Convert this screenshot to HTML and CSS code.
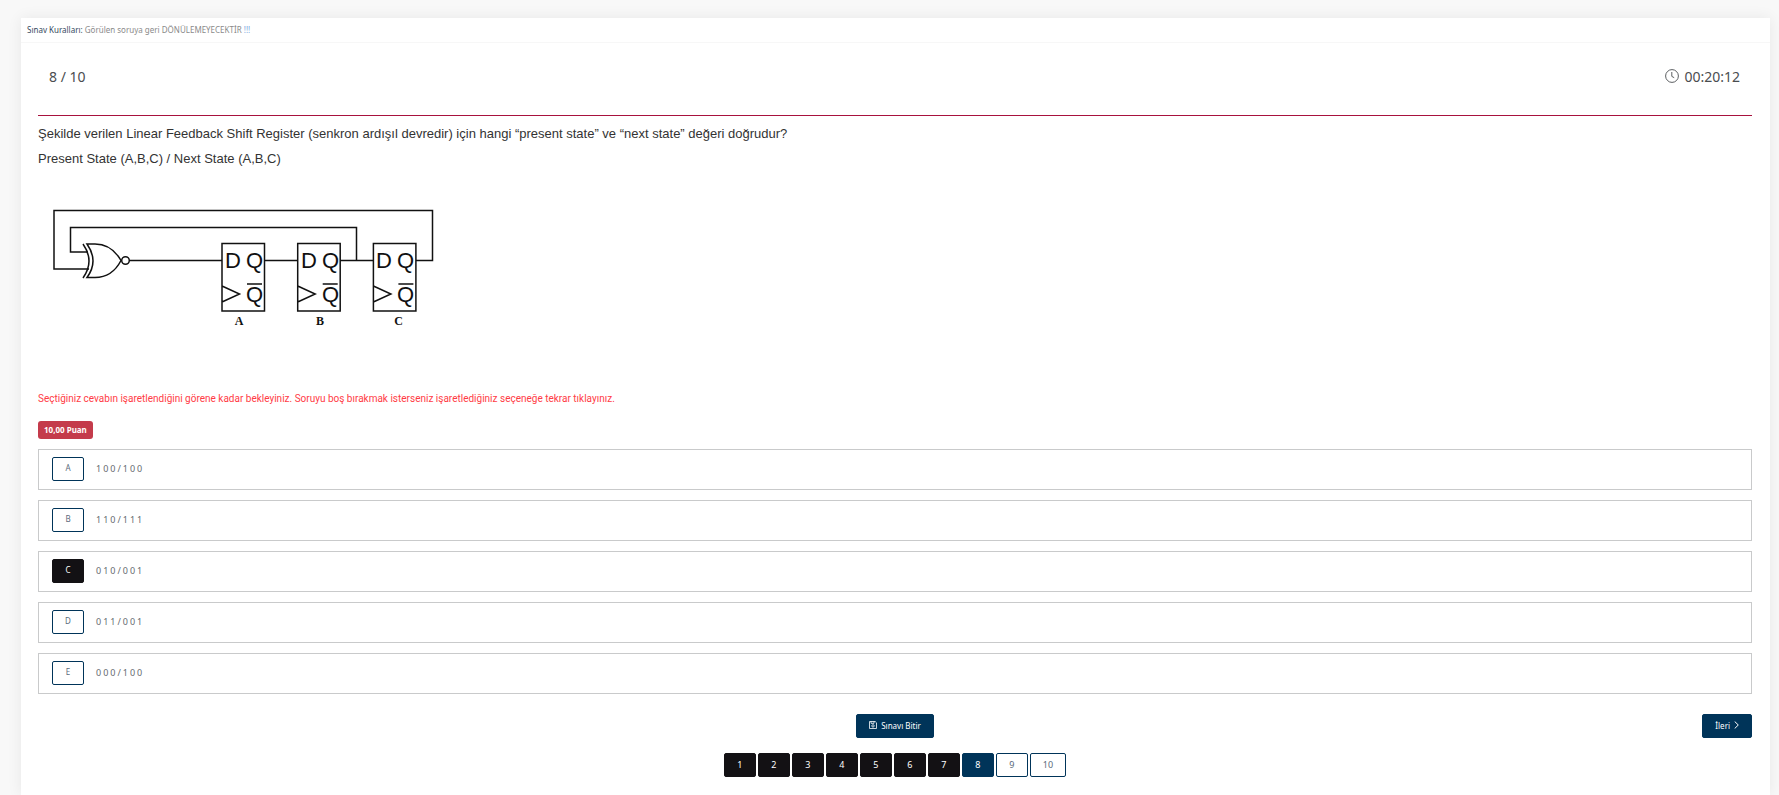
FILE: index.html
```html
<!DOCTYPE html>
<html lang="tr">
<head>
<meta charset="utf-8">
<title>Sınav</title>
<link rel="stylesheet" href="styles.css">
</head>
<body>
<main class="card">
  <header class="rules"><span class="rules-title">Sınav Kuralları:</span> Görülen soruya geri DÖNÜLEMEYECEKTİR <span class="rules-mark">!!!</span></header>
  <section class="content">
    <div class="status">
      <span>8 / 10</span>
      <span class="timer">
        <svg class="clock" viewBox="0 0 14 14" fill="none" stroke="currentColor" aria-hidden="true"><circle cx="7" cy="7" r="6.4" stroke-width="0.9"/><path d="M6.8 3v4.4l2.4 1.3" stroke-width="0.9"/></svg>
        00:20:12
      </span>
    </div>
    <div class="question">
      <p>Şekilde verilen Linear Feedback Shift Register (senkron ardışıl devredir) için hangi “present state” ve “next state” değeri doğrudur?</p>
      <p>Present State (A,B,C) / Next State (A,B,C)</p>
      <svg class="circuit" viewBox="38 190 420 160" role="img" aria-label="LFSR">
        <g fill="none" stroke="#111" stroke-width="1.5">
          <path d="M89 269H54V210.500H432.500V260.500H416"/>
          <path d="M88 252H70.500V227.500H356.500V260.500"/>
          <path d="M83 244Q95 261 83 278"/>
          <path d="M87 244H95C107 244 115 250 121 260.500C115 272 107 277.500 95 277.500H87Q99 261 87 244Z"/>
          <circle cx="125.500" cy="260.500" r="3.800"/>
          <path d="M129.500 260.500H222M264.500 260.500H298M340 260.500H374"/>
          <path d="M222 243.500h42.500v67.500H222zM222 286l17.500 8-17.500 8M247 284h15"/>
          <path d="M297.700 243.500h42.500v67.500h-42.500zM297.700 286l17.500 8-17.500 8M322.700 284h15"/>
          <path d="M373.400 243.500h42.500v67.500h-42.500zM373.400 286l17.500 8-17.500 8M398.400 284h15"/>
        </g>
        <g class="pin">
          <text x="225" y="268">D</text><text x="246" y="268">Q</text><text x="246" y="302">Q</text>
          <text x="301" y="268">D</text><text x="322" y="268">Q</text><text x="322" y="302">Q</text>
          <text x="376" y="268">D</text><text x="397" y="268">Q</text><text x="397" y="302">Q</text>
        </g>
        <g class="stage"><text x="239" y="325">A</text><text x="320" y="325">B</text><text x="398.500" y="325">C</text></g>
      </svg>
    </div>
    <p class="warning">Seçtiğiniz cevabın işaretlendiğini görene kadar bekleyiniz. Soruyu boş bırakmak isterseniz işaretlediğiniz seçeneğe tekrar tıklayınız.</p>
    <span class="badge">10,00 Puan</span>
    <div class="options">
      <div class="option"><button class="btn outline" type="button" aria-labelledby="a">A</button><span id="a">100/100</span></div>
      <div class="option"><button class="btn outline" type="button" aria-labelledby="b">B</button><span id="b">110/111</span></div>
      <div class="option"><button class="btn dark" type="button" aria-labelledby="c">C</button><span id="c">010/001</span></div>
      <div class="option"><button class="btn outline" type="button" aria-labelledby="d">D</button><span id="d">011/001</span></div>
      <div class="option"><button class="btn outline" type="button" aria-labelledby="e">E</button><span id="e">000/100</span></div>
    </div>
    <div class="actions">
      <button class="btn navy finish" type="button"><svg class="save" viewBox="0 0 8 8" fill="none" stroke="currentColor" stroke-width="0.8" aria-hidden="true"><path d="M.5.500h5.700l1.300 1.300v5.700h-7zM2 .5v1.800h3V.5"/><circle cx="4" cy="4.900" r="1.200"/></svg>Sınavı Bitir</button>
      <button class="btn navy next" type="button">İleri<svg class="chevron" viewBox="0 0 5 8" fill="none" stroke="currentColor" aria-hidden="true"><path d="M.7.500 4.300 4 .7 7.500"/></svg></button>
    </div>
    <nav class="pages">
      <button class="btn dark" type="button">1</button>
      <button class="btn dark" type="button">2</button>
      <button class="btn dark" type="button">3</button>
      <button class="btn dark" type="button">4</button>
      <button class="btn dark" type="button">5</button>
      <button class="btn dark" type="button">6</button>
      <button class="btn dark" type="button">7</button>
      <button class="btn navy" type="button">8</button>
      <button class="btn outline" type="button">9</button>
      <button class="btn outline" type="button">10</button>
    </nav>
  </section>
</main>
</body>
</html>
```
FILE: styles.css
```css
* { box-sizing: border-box; }
body {
  margin: 0;
  padding: 18px 9px 0 21px;
  min-height: 100vh;
  display: flex;
  background: #f8f8f8;
  color: #3c4043;
  font-family: "Noto Sans", "Open Sans", sans-serif;
}
p { margin: 0; }
.card {
  flex: 1;
  background: #fff;
  box-shadow: 0 0 14px rgba(0, 0, 0, 0.07);
}
.rules {
  padding: 0 6px;
  border-bottom: 1px solid #f7f7f7;
  color: #8a8a8a;
  font-size: 8px;
  line-height: 24px;
}
.rules-title { color: #34495e; }
.rules-mark { color: #7da7e0; }
.content { padding: 0 18px 18px 17px; }
.status {
  display: flex;
  justify-content: space-between;
  align-items: center;
  height: 73px;
  padding: 0 12px 6px 11px;
  border-bottom: 1px solid #a8123e;
  color: #4a4d50;
  font-size: 14px;
}
.timer { display: flex; align-items: center; gap: 5px; }
.clock { width: 14px; height: 14px; }
.question {
  padding-top: 5px;
  color: #333;
  font: 13px/25px "Liberation Sans", Arial, sans-serif;
}
.circuit { display: block; width: 420px; height: 160px; margin-top: 19px; }
.pin { font: 22px "Liberation Sans", Arial, sans-serif; fill: #111; }
.stage { font: bold 12px "Liberation Serif", serif; fill: #111; text-anchor: middle; }
.warning {
  margin-top: 39px;
  color: #ff3b45;
  font-family: Roboto, sans-serif;
  font-size: 10px;
  line-height: 20px;
}
.badge {
  display: block;
  width: fit-content;
  margin-top: 12px;
  padding: 0 6px 1px;
  border-radius: 3px;
  background: #c43b4b;
  color: #fff;
  font-size: 8px;
  font-weight: 700;
  line-height: 17px;
}
.options { display: grid; gap: 10px; margin-top: 10px; }
.option {
  display: flex;
  align-items: center;
  gap: 12px;
  height: 41px;
  padding: 0 13px 2px;
  border: 1px solid #c9cacb;
  color: #666b70;
  font-size: 9px;
  letter-spacing: 2px;
}
.btn {
  display: flex;
  align-items: center;
  justify-content: center;
  min-width: 32px;
  height: 24px;
  padding: 0 12px 2px;
  border: 1px solid #003459;
  border-radius: 2px;
  font: 8px "Noto Sans", "Open Sans", sans-serif;
}
.outline { background: #fff; color: #5b6b7b; }
.dark { background: #131114; border-color: #131114; color: #fff; }
.navy { background: #003459; color: #fff; }
.actions {
  display: grid;
  grid-template-columns: 1fr auto 1fr;
  margin-top: 20px;
}
.finish { grid-column: 2; gap: 4px; }
.next { grid-column: 3; justify-self: end; gap: 4px; }
.save { width: 8px; height: 8px; }
.chevron { width: 5px; height: 8px; }
.pages { display: flex; justify-content: center; gap: 2px; margin-top: 15px; }
.pages .btn { font-size: 9px; }
```
